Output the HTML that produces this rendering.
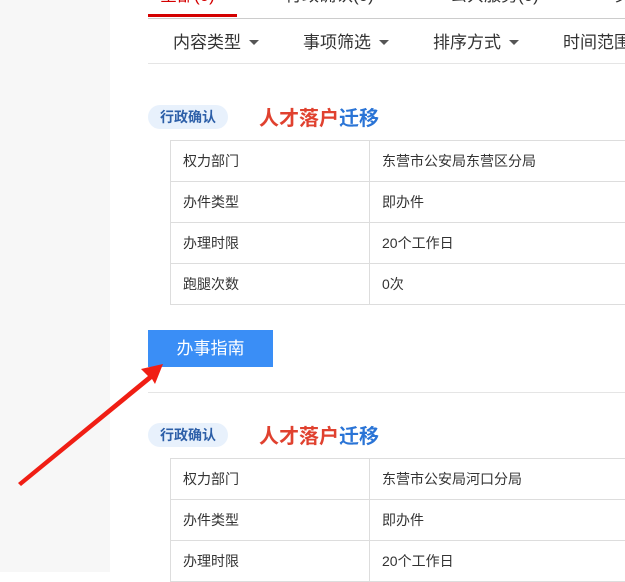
<!DOCTYPE html>
<html><head><meta charset="utf-8"><style>
*{margin:0;padding:0;box-sizing:border-box}
body{width:625px;height:572px;overflow:hidden;background:#fff;font-family:"Liberation Sans","Noto Sans CJK SC",sans-serif;position:relative}
.side{position:absolute;left:0;top:0;width:110px;height:572px;background:#f7f7f7}
.abs{position:absolute;white-space:nowrap}
.tab{position:absolute;top:-19px;font-size:17px;color:#333;white-space:nowrap}
.filter{position:absolute;top:28px;font-size:17px;color:#333;white-space:nowrap}
.tri{display:inline-block;width:0;height:0;border-left:5px solid transparent;border-right:5px solid transparent;border-top:5px solid #555;vertical-align:middle;margin-left:8px;margin-top:-3px}
.tag{position:absolute;left:148px;width:80px;height:24px;border-radius:12px;background:#e8f1fc;color:#2d5fa8;font-size:14px;font-weight:bold;text-align:center;line-height:24px}
.title{position:absolute;left:259px;font-size:20px;font-weight:bold;white-space:nowrap}
.tbl{position:absolute;left:170px;width:470px;border-collapse:collapse;font-size:14px;color:#333}
.tbl td{border:1px solid #ddd;height:41px;padding-left:12px}
.tbl td:first-child{width:199px}
</style></head><body>
<div class="side"></div>
<div class="tab" style="left:160px;color:#d40000">全部(0)</div>
<div class="tab" style="left:285px">行政确认(0)</div>
<div class="tab" style="left:450px">公共服务(0)</div>
<div class="tab" style="left:615px">其</div>
<div class="abs" style="left:148px;top:14px;width:89px;height:3px;background:#d40000"></div>
<div class="abs" style="left:148px;top:18px;width:477px;height:1px;background:#ccc"></div>
<div class="filter" style="left:173px">内容类型<span class="tri"></span></div>
<div class="filter" style="left:303px">事项筛选<span class="tri"></span></div>
<div class="filter" style="left:433px">排序方式<span class="tri"></span></div>
<div class="filter" style="left:563px">时间范围</div>
<div class="abs" style="left:148px;top:63px;width:477px;height:1px;background:#e5e5e5"></div>

<div class="tag" style="top:105px">行政确认</div>
<div class="title" style="top:102px"><span style="color:#e0412f">人才落户</span><span style="color:#2a74d6">迁移</span></div>
<table class="tbl" style="top:140px">
<tr><td>权力部门</td><td>东营市公安局东营区分局</td></tr>
<tr><td>办件类型</td><td>即办件</td></tr>
<tr><td>办理时限</td><td>20个工作日</td></tr>
<tr><td>跑腿次数</td><td>0次</td></tr>
</table>
<div class="abs" style="left:148px;top:330px;width:125px;height:37px;background:#3a8ef6;color:#fff;font-size:17px;text-align:center;line-height:37px">办事指南</div>
<div class="abs" style="left:148px;top:392px;width:477px;height:1px;background:#e5e5e5"></div>

<div class="tag" style="top:423px">行政确认</div>
<div class="title" style="top:420px"><span style="color:#e0412f">人才落户</span><span style="color:#2a74d6">迁移</span></div>
<table class="tbl" style="top:458px">
<tr><td>权力部门</td><td>东营市公安局河口分局</td></tr>
<tr><td>办件类型</td><td>即办件</td></tr>
<tr><td>办理时限</td><td>20个工作日</td></tr>
</table>

<svg class="abs" style="left:0;top:0" width="625" height="572">
<polygon points="18,483 148,376 141,369 163,364 155,384 152,379 21,486" fill="#f01e14"/>
</svg>
</body></html>
